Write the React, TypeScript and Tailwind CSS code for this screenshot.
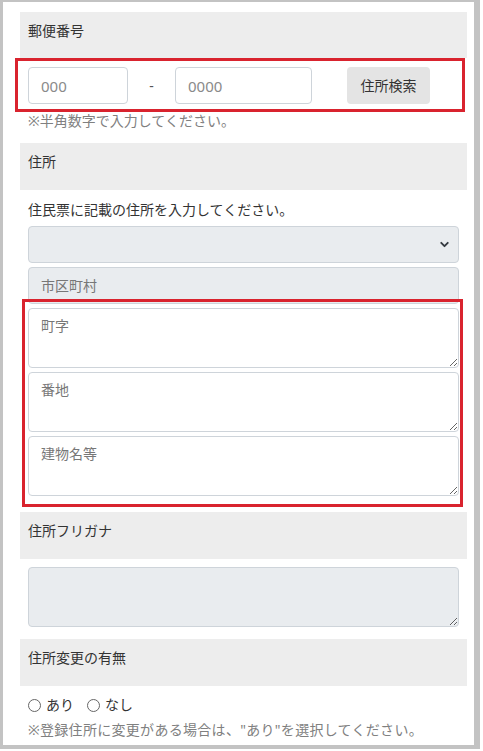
import { ChevronDown } from "lucide-react";

const FONT = "[font-family:'Noto_Sans','Noto_Sans_CJK_JP',sans-serif]";

function SectionHeader({ label }: { label: string }) {
  return (
    <div className="h-[47px] bg-[#ededed] pl-2 pt-[9px] text-[14px] leading-[20px] text-[#333]">
      {label}
    </div>
  );
}

function Area({ placeholder, disabled }: { placeholder?: string; disabled?: boolean }) {
  return (
    <textarea
      placeholder={placeholder}
      disabled={disabled}
      className={`block h-[60px] w-full rounded-[4px] border border-[#ced4da] px-3 py-[7px] text-[14px] leading-[20px] text-[#333] placeholder:text-[#777] focus:outline-none ${disabled ? "bg-[#e9ecef]" : "bg-white"}`}
    />
  );
}

export default function App() {
  return (
    <div className={`relative h-[749px] w-[480px] border-t-[2px] border-r-[6px] border-b-[4px] border-l-[3px] border-[#c3c3c3] bg-white ${FONT}`}>
      <div className="flex flex-col pt-[10px] pr-[7px] pl-[17px]">
        {/* 郵便番号 */}
        <div className="h-[46px] bg-[#ededed] pl-2 pt-[9px] text-[14px] leading-[20px] text-[#333]">郵便番号</div>
        <div className="mt-[9px] flex items-center px-2">
          <input
            placeholder="000"
            className="h-[37px] w-[100px] rounded-[4px] border border-[#ced4da] bg-white px-3 text-[15px] text-[#333] placeholder:text-[#8a8a8a] focus:outline-none"
          />
          <span className="w-[47px] text-center text-[14px] text-[#555]">-</span>
          <input
            placeholder="0000"
            className="h-[37px] w-[137px] rounded-[4px] border border-[#ced4da] bg-white px-3 text-[15px] text-[#333] placeholder:text-[#8a8a8a] focus:outline-none"
          />
          <button className="ml-[35px] h-[37px] w-[83px] rounded-[4px] bg-[#e4e4e4] text-[14px] text-[#333]">
            住所検索
          </button>
        </div>
        <p className="mt-[6px] px-2 text-[14px] leading-[21px] text-[#808080]">※半角数字で入力してください。</p>

        {/* 住所 */}
        <div className="mt-[12px]">
          <SectionHeader label="住所" />
        </div>
        <div className="px-2">
          <p className="mt-[10px] text-[14px] leading-[20px] text-[#333]">住民票に記載の住所を入力してください。</p>
          <div className="mt-[6px] flex h-[37px] items-center justify-end rounded-[4px] border border-[#ced4da] bg-[#e9ecef] pr-[7px]">
            <ChevronDown size={13} strokeWidth={3.5} className="text-[#343a40]" />
          </div>
          <input
            disabled
            placeholder="市区町村"
            className="mt-[4px] block h-[37px] w-full rounded-[4px] border border-[#ced4da] bg-[#e9ecef] px-3 text-[14px] placeholder:text-[#777] focus:outline-none"
          />
          <div className="mt-[4px] flex flex-col gap-[4px]">
            <Area placeholder="町字" />
            <Area placeholder="番地" />
            <Area placeholder="建物名等" />
          </div>
        </div>

        {/* 住所フリガナ */}
        <div className="mt-[16px]">
          <SectionHeader label="住所フリガナ" />
        </div>
        <div className="mt-[8px] px-2">
          <Area disabled />
        </div>

        {/* 住所変更の有無 */}
        <div className="mt-[12px]">
          <SectionHeader label="住所変更の有無" />
        </div>
        <div className="mt-[9px] flex items-center px-2 text-[14px] leading-[20px] text-[#333]">
          <label className="flex items-center">
            <span className="h-[13px] w-[13px] rounded-full border border-[#666] bg-white" />
            <span className="ml-[5px]">あり</span>
          </label>
          <label className="ml-[13px] flex items-center">
            <span className="h-[13px] w-[13px] rounded-full border border-[#666] bg-white" />
            <span className="ml-[5px]">なし</span>
          </label>
        </div>
        <p className="mt-[5px] px-2 text-[14px] leading-[20px] tracking-[0.3px] text-[#808080]">
          ※登録住所に変更がある場合は、"あり"を選択してください。
        </p>
      </div>

      {/* annotation boxes */}
      <div className="pointer-events-none absolute top-[56px] left-[12px] h-[54px] w-[450px] border-[3px] border-[#d9232e]" />
      <div className="pointer-events-none absolute top-[297px] left-[19px] h-[208px] w-[441px] border-[3px] border-[#d9232e]" />
    </div>
  );
}
